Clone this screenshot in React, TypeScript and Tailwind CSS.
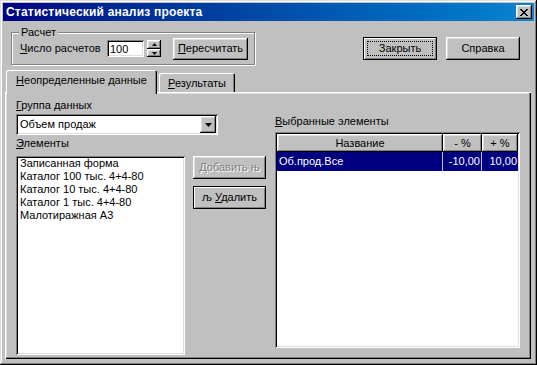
import React from "react";

const raised =
  "shadow-[inset_-1px_-1px_#000,inset_1px_1px_#fff,inset_-2px_-2px_#808080,inset_2px_2px_#dfdfdf]";
const sunken =
  "shadow-[inset_1px_1px_#808080,inset_-1px_-1px_#fff,inset_2px_2px_#000,inset_-2px_-2px_#dfdfdf]";

function Btn({
  children,
  w,
  def,
  focus,
  disabled,
}: {
  children: React.ReactNode;
  w: string;
  def?: boolean;
  focus?: boolean;
  disabled?: boolean;
}) {
  return (
    <div
      className={
        "flex items-center justify-center bg-[#c0c0c0] " +
        w +
        " " +
        (def
          ? "border border-black shadow-[inset_1px_1px_#fff,inset_-1px_-1px_#808080] p-[3px]"
          : raised + " p-[4px]")
      }
    >
      <div
        className={
          "w-full h-full flex items-center justify-center leading-[13px] " +
          (focus ? "border border-dotted border-black" : "") +
          (disabled ? " text-[#808080] [text-shadow:1px_1px_#fff]" : " text-black")
        }
      >
        {children}
      </div>
    </div>
  );
}

function Arrow({ dir }: { dir: "up" | "down" }) {
  return (
    <svg width="7" height="4" viewBox="0 0 7 4" className="block">
      {dir === "down" ? (
        <polygon points="0,0 7,0 3.5,4" fill="#000" />
      ) : (
        <polygon points="0,4 7,4 3.5,0" fill="#000" />
      )}
    </svg>
  );
}

export default function App() {
  return (
    <div className="w-[537px] h-[365px] bg-[#c0c0c0] flex flex-col p-[3px] shadow-[inset_-1px_-1px_#000,inset_1px_1px_#dfdfdf,inset_-2px_-2px_#808080,inset_2px_2px_#fff] font-['Liberation_Sans',Arial,sans-serif] text-[11px] text-black leading-[13px] select-none">
      {/* Title bar */}
      <div className="h-[18px] shrink-0 flex items-center justify-between pl-[3px] pr-[2px] bg-gradient-to-r from-[#000080] to-[#1084d0]">
        <span className="text-white font-bold text-[12px] leading-[14px] tracking-[0.2px]">
          Статистический анализ проекта
        </span>
        <div className={"w-[16px] h-[14px] bg-[#c0c0c0] flex items-center justify-center " + raised}>
          <svg width="8" height="7" viewBox="0 0 8 7" className="block">
            <path d="M0 0h2v1h1v1h2v-1h1v-1h2v1h-1v1h-1v1h-1v1h1v1h1v1h1v1h-2v-1h-1v-1h-2v1h-1v1h-2v-1h1v-1h1v-1h1v-1h-1v-1h-1v-1h-1z" fill="#000" />
          </svg>
        </div>
      </div>

      {/* Top row */}
      <div className="h-[44px] shrink-0 flex items-start">
        <div className="relative ml-[8px] mt-[11px] w-[244px] h-[33px] border border-[#808080] shadow-[inset_1px_1px_#fff,1px_1px_#fff] flex items-center pl-[8px]">
          <span className="absolute -top-[7px] left-[7px] px-[2px] bg-[#c0c0c0]">Расчет</span>
          <span className="w-[87px] shrink-0">
            <span className="underline">Ч</span>исло расчетов
          </span>
          <div className={"w-[37px] h-[17px] bg-white flex items-center pl-[3px] pt-[1px] " + sunken}>100</div>
          <div className="ml-[3px] w-[14px] h-[17px] flex flex-col">
            <div className={"h-[9px] bg-[#c0c0c0] flex items-center justify-center " + raised}>
              <svg width="5" height="3" viewBox="0 0 5 3" className="block">
                <polygon points="0,3 5,3 2.5,0" fill="#000" />
              </svg>
            </div>
            <div className={"h-[8px] bg-[#c0c0c0] flex items-center justify-center " + raised}>
              <svg width="5" height="3" viewBox="0 0 5 3" className="block">
                <polygon points="0,0 5,0 2.5,3" fill="#000" />
              </svg>
            </div>
          </div>
          <div className="ml-[12px] h-[22px] flex">
            <Btn w="w-[75px]">
              <span>
                <span className="underline">П</span>ересчитать
              </span>
            </Btn>
          </div>
        </div>
        <div className="ml-auto mt-[16px] mr-[14px] h-[23px] flex gap-[9px]">
          <Btn w="w-[74px]" def focus>
            Закрыть
          </Btn>
          <Btn w="w-[74px]">Справка</Btn>
        </div>
      </div>

      {/* Tabs */}
      <div className="mt-[5px] h-[22px] shrink-0 flex items-end pl-[3px]">
        <div className="relative z-10 w-[151px] h-[24px] -mb-[2px] bg-[#c0c0c0] rounded-t-[2px] shadow-[inset_1px_1px_#fff,inset_-1px_0_#000,inset_-2px_0_#808080] flex justify-center pt-[4px]">
          <span>
            <span className="underline">Н</span>еопределенные данные
          </span>
        </div>
        <div className="ml-[2px] w-[76px] h-[19px] bg-[#c0c0c0] rounded-t-[2px] shadow-[inset_1px_1px_#fff,inset_-1px_0_#000,inset_-2px_0_#808080] flex justify-center pt-[4px]">
          <span>
            <span className="underline">Р</span>езультаты
          </span>
        </div>
      </div>

      {/* Panel */}
      <div className="flex-1 ml-[2px] mr-[3px] mb-[3px] bg-[#c0c0c0] shadow-[inset_1px_1px_#fff,inset_-1px_-1px_#000,inset_-2px_-2px_#808080,inset_2px_2px_#dfdfdf] flex pl-[11px] pt-[7px]">
        {/* Left column */}
        <div className="w-[250px] flex flex-col">
          <span>
            <span className="underline">Г</span>руппа данных
          </span>
          <div className={"mt-[2px] w-[202px] h-[21px] bg-white flex items-center p-[2px] " + sunken}>
            <span className="flex-1 pl-[2px]">Объем продаж</span>
            <div className={"w-[16px] h-[17px] bg-[#c0c0c0] flex items-center justify-center " + raised}>
              <Arrow dir="down" />
            </div>
          </div>
          <span className="mt-[2px]">
            <span className="underline">Э</span>лементы
          </span>
          <div className="mt-[6px] flex items-start">
            <div className={"w-[169px] h-[199px] bg-white flex flex-col px-[4px] py-[1px] " + sunken}>
              <span>Записанная форма</span>
              <span>Каталог 100 тыс. 4+4-80</span>
              <span>Каталог 10 тыс. 4+4-80</span>
              <span>Каталог 1 тыс. 4+4-80</span>
              <span>Малотиражная А3</span>
            </div>
            <div className="ml-[8px] flex flex-col gap-[7px]">
              <div className="h-[23px] flex">
                <Btn w="w-[73px]" disabled>
                  <span>
                    <span className="underline">Д</span>обавить њ
                  </span>
                </Btn>
              </div>
              <div className="h-[23px] flex">
                <Btn w="w-[73px]" def>
                  <span>
                    љ <span className="underline">У</span>далить
                  </span>
                </Btn>
              </div>
            </div>
          </div>
        </div>

        {/* Right column */}
        <div className="ml-[9px] pt-[16px] flex flex-col">
          <span>
            <span className="underline">В</span>ыбранные элементы
          </span>
          <div className={"mt-[4px] w-[245px] h-[216px] bg-white p-[2px] flex flex-col " + sunken}>
            <div className="h-[18px] flex">
              <div className={"w-[166px] bg-[#c0c0c0] flex items-center justify-center " + raised}>Название</div>
              <div className={"w-[39px] bg-[#c0c0c0] flex items-center justify-center " + raised}>- %</div>
              <div className={"w-[36px] bg-[#c0c0c0] flex items-center justify-center " + raised}>+ %</div>
            </div>
            <div className="h-[19px] flex bg-[#000080] text-white">
              <div className="w-[166px] flex items-center pl-[2px] border-r border-[#c0c0c0]">Об.прод.Все</div>
              <div className="w-[39px] flex items-center justify-end pr-[1px] border-r border-[#c0c0c0]">-10,00</div>
              <div className="w-[36px] flex items-center justify-end pr-[1px]">10,00</div>
            </div>
          </div>
        </div>
      </div>
    </div>
  );
}
